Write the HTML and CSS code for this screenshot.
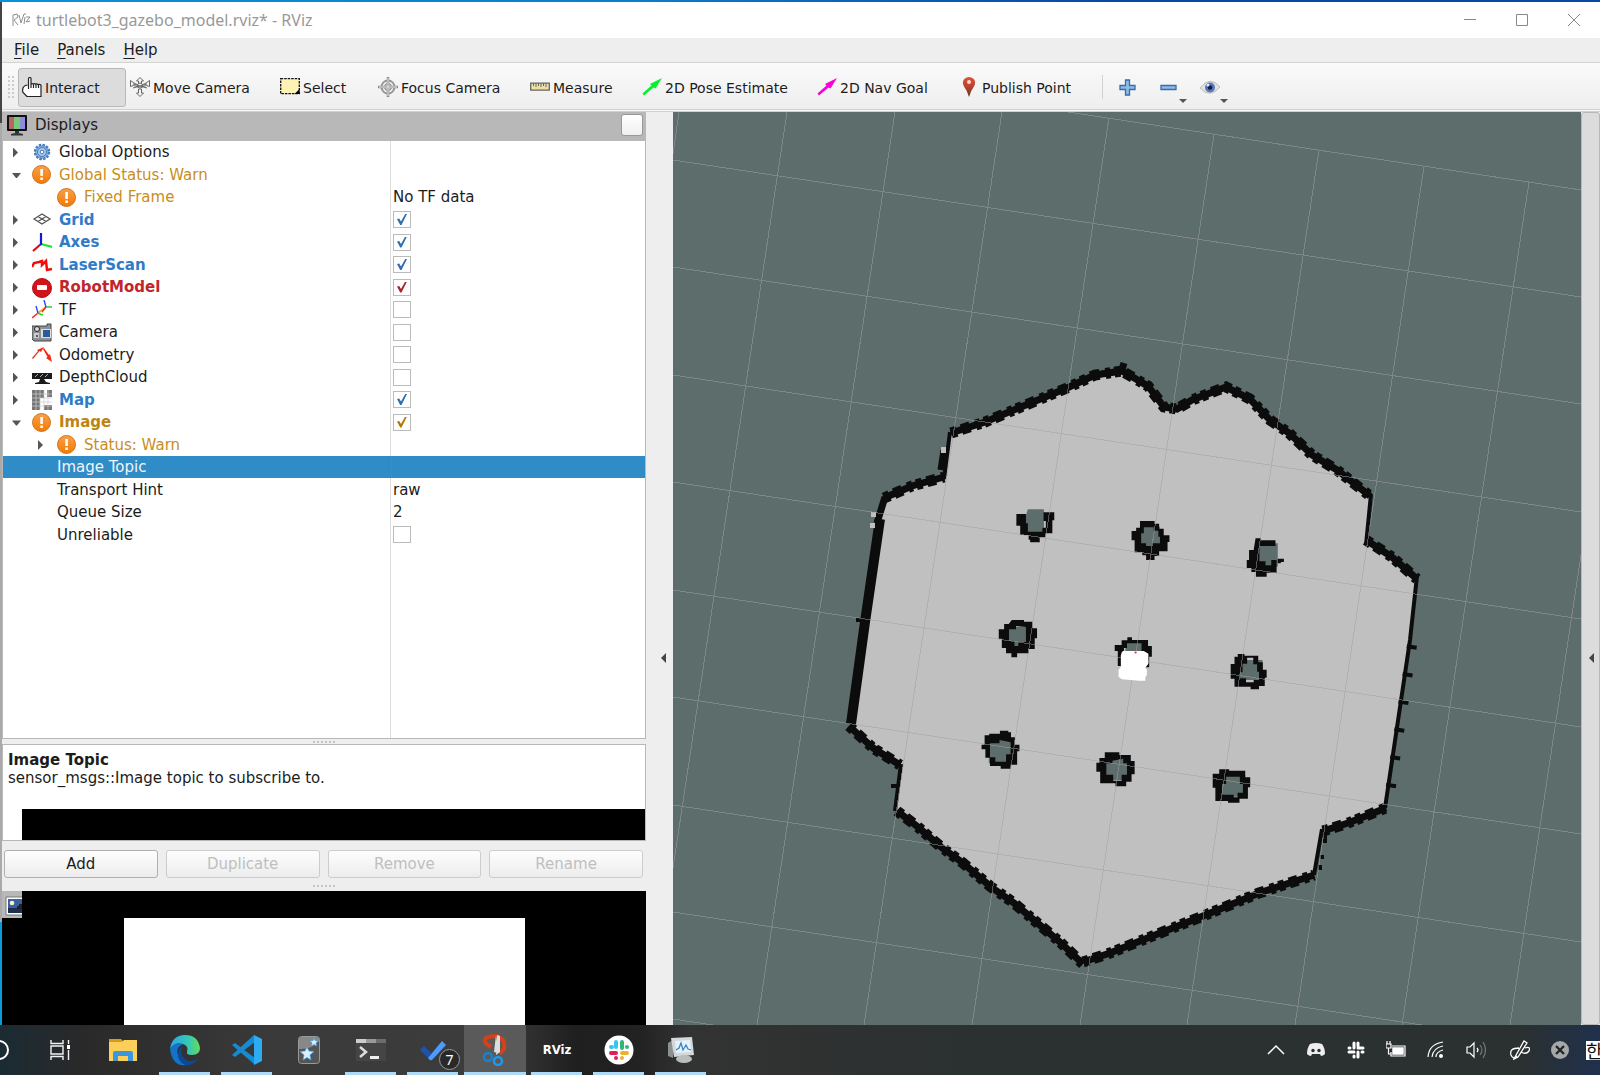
FILE: index.html
```html
<!DOCTYPE html>
<html lang="en">
<head>
<meta charset="utf-8">
<title>turtlebot3_gazebo_model.rviz* - RViz</title>
<link rel="stylesheet" href="styles.css">
</head>
<body>
<div class="window">
<header class="titlebar">
  <svg class="app-mark" width="20" height="16" viewBox="0 0 20 16" fill="none" stroke="#8c8c8c"><path d="M2 14V3l4-1 1 3-4 3 4 5M8 3l2 8 3-9M14 5l-1 7M13 2h2M15 5h4l-4 5 4-1"/></svg>
  <h1 class="title">turtlebot3_gazebo_model.rviz* - RViz</h1>
  <div class="caption-buttons">
    <button aria-label="Minimize"><svg width="12" height="12" viewBox="0 0 12 12"><path d="M0 5.500h12"/></svg></button>
    <button aria-label="Maximize"><svg width="12" height="12" viewBox="0 0 12 12"><path d="M.5.5h11v11H.5z"/></svg></button>
    <button aria-label="Close"><svg width="12" height="12" viewBox="0 0 12 12"><path d="M0 0l12 12M12 0L0 12"/></svg></button>
  </div>
</header>
<nav class="menubar">
  <button><u>F</u>ile</button><button><u>P</u>anels</button><button><u>H</u>elp</button>
</nav>
<div class="toolbar">
  <span class="grip"></span>
  <div class="tools">
  <button class="tool active"><svg width="20" height="20" viewBox="0 0 20 20"><path d="M6.500 12V2q0-1.500 1.300-1.500T9 2v5q1.200-1 2.300.200 1.200-1 2.400 0 1.200-.8 2.300.4 1.800-.8 3 .6V19.500H5L1 15.500q-1-3 .5-5.500 1.500-2 4-2M9 7v4M11.500 7.500V11M14 7.500V11M16.500 8V11" fill="#fff" stroke="#222" stroke-width="1.200"/></svg><span>Interact</span></button>
  <button class="tool"><svg width="20" height="20" viewBox="0 0 20 20"><g fill="#f4f4f4" stroke="#666"><path d="M10 .5L6.500 4h2v3h3V4h2zM10 19.500L6.500 16h2v-4h3v4h2zM.5 3.500v6l3-1L8 10V8L4 6zM19.500 3.500v6l-3-1L12 10V8l4-2z"/><circle cx="10" cy="8.500" r="2.500"/><path d="M3 7l14 4M17 7L3 11"/></g></svg><span>Move Camera</span></button>
  <button class="tool"><svg width="20" height="20" viewBox="0 0 20 20"><path d="M.7 1.700h18.600v15H.7z" fill="#fdf3b5" stroke="#111" stroke-width="1.300" stroke-dasharray="2.500 1"/><path d="M19.500 12v5h-5z"/></svg><span>Select</span></button>
  <button class="tool"><svg width="20" height="20" viewBox="0 0 20 20" fill="none" stroke="#888"><circle cx="10" cy="10" r="6.500" stroke="#999" stroke-width="2"/><circle cx="10" cy="10" r="3.500" stroke="#777"/><path d="M10 0v20M0 10h20" stroke-width="2.500"/><path d="M10 1v18M1 10h18" stroke="#eee"/></svg><span>Focus Camera</span></button>
  <button class="tool"><svg width="20" height="20" viewBox="0 0 20 20"><path d="M.7 6.200h18.600v7H.7z" fill="#ece0a6" stroke="#666" stroke-width="1.300"/><path d="M3.500 6v3M6 6v4M8.500 6v3M11 6v4M13.500 6v3M16 6v4" stroke="#666"/></svg><span>Measure</span></button>
  <button class="tool"><svg width="20" height="20" viewBox="0 0 20 20" fill="#00f32b"><path d="M20 1L8 7l1.500 1.500L.5 16.500 2 18.500 11.500 10.500l2 1z"/></svg><span>2D Pose Estimate</span></button>
  <button class="tool"><svg width="20" height="20" viewBox="0 0 20 20" fill="#fb00d2"><path d="M20 1L8 7l1.500 1.500L.5 16.500 2 18.500 11.500 10.500l2 1z"/></svg><span>2D Nav Goal</span></button>
  <button class="tool pin"><svg width="14" height="20" viewBox="0 0 14 20"><defs><linearGradient id="pin" x2="0" y2="1"><stop offset="0" stop-color="#e0523a"/><stop offset=".5" stop-color="#b8432c"/><stop offset="1" stop-color="#60351f"/></linearGradient></defs><path d="M7 20Q5.500 14 2 9.500-.5 5 2.500 1.800 7-1.800 11.500 1.800 14.500 5 12 9.500 8.500 14 7 20z" fill="url(#pin)"/><circle cx="7" cy="5" r="2" fill="#f8d8c8"/></svg><span>Publish Point</span></button>
  </div>
  <span class="separator"></span>
  <button class="mini" aria-label="Add tool"><svg width="17" height="17" viewBox="0 0 17 17"><path d="M6.500 1h4v5.500H16v4h-5.500V16h-4v-5.500H1v-4h5.500z" fill="#8fbbe8" stroke="#376cab" stroke-width="1.300"/></svg></button>
  <button class="mini drop" aria-label="Remove tool"><svg width="17" height="17" viewBox="0 0 17 17"><path d="M1 6.500h15v4H1z" fill="#8fbbe8" stroke="#376cab" stroke-width="1.300"/></svg></button>
  <button class="mini drop" aria-label="Tool visibility"><svg width="20" height="17" viewBox="0 0 20 17"><path d="M0 9Q10-4 20 8 10 20 0 9z" fill="#e2e2e4" stroke="#bbb"/><circle cx="10" cy="8.500" r="5" fill="#5977b8"/><circle cx="10" cy="8.500" r="2.300" fill="#111b3a"/><circle cx="8" cy="6" r="1.500" fill="#dce8ff"/></svg></button>
</div>
<main class="workspace">
<section class="sidebar">
  <div class="dock-title">
    <svg width="20" height="21" viewBox="0 0 20 21"><rect width="20" height="16" rx="1" fill="#111"/><path d="M2 2h5v12H2z" fill="#bd6363"/><path d="M7 2h6v12H7z" fill="#76cc76"/><path d="M13 2h5v12h-5z" fill="#8c8ce0"/><path d="M8 16h4v2H8zM4 19q6-2 12 0v1.500H4z" fill="#333"/></svg>
    <h2>Displays</h2><button aria-label="Float panel"></button>
  </div>
  <div class="tree-box">
  <table class="tree">
    <tr><td><span class="arrow"></span><svg class="ic" viewBox="0 0 20 20"><circle cx="10" cy="9" r="7" fill="#8fb5e3" stroke="#487bb9" stroke-width="2.500" stroke-dasharray="2.400 1.300"/><circle cx="10" cy="9" r="4.500" fill="#a9c8ee" stroke="#487bb9"/><circle cx="10" cy="9" r="1.800" fill="#fff" stroke="#487bb9"/></svg>Global Options</td><td></td></tr>
    <tr class="warn"><td><span class="arrow open"></span><svg class="ic"><use href="#warning"/></svg>Global Status: Warn</td><td></td></tr>
    <tr class="warn child"><td><span class="arrow none"></span><svg class="ic"><use href="#warning"/></svg>Fixed Frame</td><td>No TF data</td></tr>
    <tr class="on"><td><span class="arrow"></span><svg class="ic" viewBox="0 0 20 20" fill="none" stroke="#555" stroke-width="1.300"><path d="M2 9l8-5 8 5-8 5zM6 6.500l8 5M14 6.500l-8 5"/></svg>Grid</td><td><input type="checkbox" aria-label="Grid" checked></td></tr>
    <tr class="on"><td><span class="arrow"></span><svg class="ic" viewBox="0 0 20 20" fill="none" stroke-width="2.200"><path d="M9 11L1 18" stroke="#d80d18"/><path d="M9 11l11 3" stroke="#16ec22"/><path d="M9 12V0" stroke="#1616e8"/></svg>Axes</td><td><input type="checkbox" aria-label="Axes" checked></td></tr>
    <tr class="on"><td><span class="arrow"></span><svg class="ic" viewBox="0 0 20 20" fill="none" stroke="#f50b0b" stroke-width="2.500"><path d="M0 12l2-4 5-1 3-1v4l4-4 1 9 5-1"/></svg>LaserScan</td><td><input type="checkbox" aria-label="LaserScan" checked></td></tr>
    <tr class="error"><td><span class="arrow"></span><svg class="ic" viewBox="0 0 20 20"><circle cx="10" cy="10" r="9.500" fill="#d21319" stroke="#ad1116"/><rect x="5" y="7" width="10" height="5" rx="1" fill="#fff"/></svg>RobotModel</td><td><input type="checkbox" aria-label="RobotModel" checked></td></tr>
    <tr><td><span class="arrow"></span><svg class="ic" viewBox="0 0 20 20" fill="none" stroke-width="1.400"><path d="M6 13l8-6" stroke="#f4b21a" stroke-width="2"/><path d="M6 13l-6 5M14 7l-4 5" stroke="#f22"/><path d="M5 13l6 2M14 7h6" stroke="#1adc1a"/><path d="M6 13L4 6M14 7L12 0" stroke="#34f"/></svg>TF</td><td><input type="checkbox" aria-label="TF"></td></tr>
    <tr><td><span class="arrow"></span><svg class="ic" viewBox="0 0 20 20"><path d="M1 3h14V1h4v17H2L0 16V3z" fill="#8e9295" stroke="#444"/><circle cx="5" cy="6" r="2.500" fill="#ddd" stroke="#222"/><path d="M9 6h10v9H9z" fill="#ddd"/><path d="M11 7h7v7h-7z" fill="#285a9c"/><path d="M2 10h5v5H2z" fill="#ccc"/><circle cx="5" cy="13" r="1" fill="#333"/></svg>Camera</td><td><input type="checkbox" aria-label="Camera"></td></tr>
    <tr><td><span class="arrow"></span><svg class="ic" viewBox="0 0 20 20" fill="#f42a18"><path d="M0 13L6 6 5 5l7-3-3 5-1.500-1L1 14zM12 3l5 7 1-1 2 8-6-4 1.500-1L11 4z"/></svg>Odometry</td><td><input type="checkbox" aria-label="Odometry"></td></tr>
    <tr><td><span class="arrow"></span><svg class="ic" viewBox="0 0 20 20" fill="#1b1b1b"><path d="M0 5h20v6H0zM8 11h4l2 3 4 1v1H3v-1l4-1z"/><path d="M3 9l3-3M8 9l3-3M13 9l3-3" stroke="#aaa"/></svg>DepthCloud</td><td><input type="checkbox" aria-label="DepthCloud"></td></tr>
    <tr class="on"><td><span class="arrow"></span><svg class="ic" viewBox="0 0 20 20"><path d="M0 0h12v8H8v12H0zM15 0h5v7h-5zM12 15h8v5h-8z" fill="#777"/><path d="M4 0v20M8 0v20M12 0v20M16 0v20M0 4h20M0 8h20M0 12h20M0 16h20" stroke="#ccc" stroke-width=".7"/></svg>Map</td><td><input type="checkbox" aria-label="Map" checked></td></tr>
    <tr class="warn bold"><td><span class="arrow open"></span><svg class="ic"><use href="#warning"/></svg>Image</td><td><input type="checkbox" aria-label="Image" checked></td></tr>
    <tr class="warn child"><td><span class="arrow"></span><svg class="ic"><use href="#warning"/></svg>Status: Warn</td><td></td></tr>
    <tr class="leaf selected"><td>Image Topic</td><td></td></tr>
    <tr class="leaf"><td>Transport Hint</td><td>raw</td></tr>
    <tr class="leaf"><td>Queue Size</td><td>2</td></tr>
    <tr class="leaf"><td>Unreliable</td><td><input type="checkbox" aria-label="Unreliable"></td></tr>
  </table>
  </div>
  <div class="handle"></div>
  <div class="help-box"><h3>Image Topic</h3><p>sensor_msgs::Image topic to subscribe to.</p><div class="blank"></div></div>
  <div class="actions"><button>Add</button><button disabled>Duplicate</button><button disabled>Remove</button><button disabled>Rename</button></div>
  <div class="handle low"></div>
  <div class="image-panel">
    <div class="image-tab"><svg width="17" height="20" viewBox="0 0 17 20"><path d="M1 1h20v18H1z" fill="#fff" stroke="#777"/><path d="M3 3h16v14H3z" fill="#3b5e9e"/><path d="M3 12h14v5H3z" fill="#1f2e50"/><circle cx="7" cy="7" r="2.300" fill="#f4f3cd"/><path d="M12 13v-3h2V8h3v5z" fill="#222"/></svg></div>
    <div class="image-view"></div>
  </div>
</section>
<button class="collapse left" aria-label="Collapse left dock"></button>
<section class="view" aria-label="3D view">
<svg viewBox="673 112 908 913" preserveAspectRatio="xMidYMid slice">
  <path fill="#c0c0c0" d="M1121 371L1171 409 1190 400 1226 386 1251 398 1289 433 1370 495 1366 541 1415 578 1410 640 1385 807 1347 825 1322 831 1314 875 1259 895 1203 917 1098 958 1083 965 1060 942 1014 903 991 887 941 847 897 810 901 765 850 725 880 520 884 497 945 477 951 433 1021 408 1067 388z"/>
  <g class="wall">
    <path d="M951 433L985 422 1021 407 1067 388 1095 375 1122 371 1148 386 1164 407 1177 409 1192 400 1226 387 1250 399 1270 420 1289 433 1312 455 1337 470 1370 496"/>
    <path d="M1366 540L1392 557 1417 579M849 726L873 748 900 765M897 811L918 827 941 847 963 863 991 887 1014 903 1035 921 1060 942 1083 964"/>
    <path d="M1083 962L1110 953 1150 937 1203 916 1259 893 1314 875M1323 831L1348 823 1386 808M884 498L912 486 944 477"/>
    <path class="rough" d="M951 433L985 422 1021 407 1067 388 1095 375 1122 371 1148 386 1164 407 1177 409 1192 400 1226 387 1250 399 1270 420 1289 433 1312 455 1337 470 1370 496"/>
    <path class="rough" d="M1366 540L1392 557 1417 579M849 726L873 748 900 765M897 811L918 827 941 847 963 863 991 887 1014 903 1035 921 1060 942 1083 964"/>
    <path class="rough" d="M1083 962L1110 953 1150 937 1203 916 1259 893 1314 875M1323 831L1348 823 1386 808M884 498L912 486 944 477"/>
    <path class="thick" d="M880 519L865 622 851 724"/>
    <path class="thin" d="M1371 494L1366 545M1417 576L1410 640 1385 808M901 764L895 811M1322 829L1314 875M950 432L944 479"/>
    <path d="M885 497L877 523M944 450L941 470M1121 373l3-10" />
    <path class="thick" stroke-dasharray="4 24" d="M1412 645L1388 806"/>
    <path class="thin" d="M856 620h8M891 786h6M1325 831v12M1322 855v4M1320 865v5"/>
  </g>
  <path fill="#c0c0c0" d="M941 447h5v6h-5zM871 512h5v5h-5zM870 523h5v5h-5z"/>
  <g transform="translate(830 350) scale(.3827 .3333)">
    <g fill="#5c6d6b"><path d="M517 478h42v70h-52v-35zM812 530h50v70h-50zM1118 580h52v70h-52zM468 830h50v60h-50zM772 875h45v35h-45zM1065 930h65v60h-65z"/></g>
    <g fill="#0c0c0c" fill-rule="evenodd">
      <path d="M487 492h25v28h5v25h38v-12h9v-20h-6v-26h28v24h-5v39h-18v12h-15v15h-25v-8h-4v-14h-22v-28h-10z"/>
      <path d="M810 513h38v8h12v15h12v20h15v20h-5v28h-22v14h-12v12h-22v-14h-10v-9h-20v-36h-8v-28h12v-10h10zM820 532v18h-7v30h13v8h16v-8h20v-20h-4v-18h-12v-10z"/>
      <path d="M1112 565h14v6h38v17h-42v46h16v12h15v-16h14v38h-26v12h-28v-14h-12v-12h-12v-24h6v-30h12zM1170 640v-14h16v10h-8v4z"/>
      <path d="M475 810h32v5h22v20h12v30h-6v32h-16v13h-30v12h-15v-12h-14v-16h-11v-28h-8v-28h14v-16h12zM486 828v10h-18v35h14v15h10v-12h20v-45z"/>
      <path d="M777 862h12v8h42v18h10v32h-7v32h-12v-42h-8v-30h-38v14h-8v12h-6v42h-10v-45h-8v-18h18v-14h15z"/>
      <path d="M1065 912h18v5h36v20h12v22h10v24h-5v25h-15v10h-22v-8h-42v-24h-10v-44h10v-22h9zM1090 923v18h-12v26h-7v18h16v12h20v-7h14v-25h-5v-22h-10v-20z"/>
    </g>
  </g>
  <g transform="translate(830 640) scale(.3827 .3333)">
    <g fill="#5c6d6b"><path d="M415 300h60v70h-60zM720 355h60v65h-60zM1025 405h60v65h-60z"/></g>
    <g fill="#0c0c0c" fill-rule="evenodd">
      <path d="M444 272h22v5h7v15h10v22h12v20h-6v40h-17v12h-26v-8h-28v-25h-12v-25h-10v-14h8v-28h12v-5h28zM443 300v10h-25v42h14v13h28v-22h12v-36z"/>
      <path d="M718 337h38v8h30v18h10v40h-8v22h-14v14h-28v-9h-40v-35h-10v-27h8v-14h14zM738 362v8h-16v34h18v18h22v-18h14v-34h-10v-14z"/>
      <path d="M1017 388h26v4h42v20h13v30h-6v34h-22v12h-30v-5h-33v-40h-7v-42h17zM1035 410v22h-10v32h30v8h10v-14h14v-26h-8v-22z"/>
    </g>
  </g>
  <path class="grid" d="M679 112L673 154M787 112L673 868M895 112L757 1025M1002 112L864 1025M1109 118L972 1025M1214 134L1080 1025M1319 150L1187 1025M1424 166L1295 1025M1529 182L1402 1025M1581 555L1510 1025M1068 112L1581 190M673 160L1581 297M673 267L1581 404M673 375L1581 512M673 482L1581 619M673 590L1581 727M673 697L1581 834M673 805L1581 942M673 912L1422 1025M673 1019L713 1025"/>
  <g transform="translate(830 350) scale(.3827 .3333)">
    <path fill="#fff" d="M765 903h55l12 8v30l-8 12 4 6v16l-4 7v10h-16l-45-4-9-8v-20l6-10v-34z"/>
    <path fill="#d22" d="M796 905h5v5h-5z"/>
  </g>
</svg>
</section>
<button class="collapse right" aria-label="Expand right dock"></button>
</main>
</div>
<footer class="taskbar">
  <div class="apps">
    <button aria-label="Cortana"><svg width="22" height="22" viewBox="0 0 22 22"><circle cx="11" cy="11" r="9" fill="none" stroke="#fff" stroke-width="2"/></svg></button>
    <button aria-label="Task view"><svg width="22" height="20" viewBox="0 0 22 20" fill="none" stroke="#f2f2f2" stroke-width="1.400"><path d="M1 0v3.500h12V0M1 20v-3.500h12V20M1 6h12v8H1zM18.500 0v4M18.500 10v10"/><path d="M17 5h3v4h-3z" fill="#fff" stroke="none"/></svg></button>
    <button aria-label="File Explorer"><svg width="28" height="24" viewBox="0 0 28 24"><path d="M0 1h12l3 3H0z" fill="#d99a16"/><path d="M0 4h13l2-2h13v21H0z" fill="#fccf5a"/><path d="M4 23v-8q0-2 2-2h16q2 0 2 2v8h-5v-5H9v5z" fill="#3b97dd"/></svg></button>
    <button class="open" aria-label="Edge"><svg width="32" height="32" viewBox="0 0 32 32"><defs><linearGradient id="ed" x2="1"><stop stop-color="#2aa7e0"/><stop offset=".6" stop-color="#35c6b8"/><stop offset="1" stop-color="#67db58"/></linearGradient></defs><path d="M1 15Q3 1 16 1t15 13q0 7-8 7-6 0-5-3Q20 12 14 10 6 8 1 15z" fill="url(#ed)"/><path d="M1 15Q6 7 14 10q-8 4-5 11 4 9 13 9Q4 36 1 15z" fill="#1473c7"/><path d="M14 12q-5 8 3 14 6 3 12-2-4 8-13 7Q8 27 9 19q1-5 5-7z" fill="#0c4a96"/></svg></button>
    <button class="open" aria-label="Visual Studio Code"><svg width="32" height="32" viewBox="0 0 32 32"><path d="M1 11l3-2 20 15V8L4 23l-3-2 22-20v29z" fill="#168bd2"/><path d="M23 1l8 4v22l-8 4z" fill="#2cadf3"/></svg></button>
    <button aria-label="Anki"><svg width="22" height="28" viewBox="0 0 22 28"><rect x=".5" y=".5" width="21" height="27" rx="3" fill="#555" stroke="#999"/><path d="M1 13q12 1 20-8V3q0-2-2-2H3Q1 1 1 3z" fill="#888"/><path d="M9 11l2 4 5 .5-4 3.500 1 5-4-2.500L5 24l1-5-4-3.500 5-.5zM16 2l1 2.500 3 .5-2 2 .5 3-2.500-1.500L13.500 10l.5-3-2-2 3-.5z" fill="#d9efff" stroke="#3b9fe8" stroke-width=".7"/></svg></button>
    <button class="open" aria-label="Terminal"><svg width="30" height="24" viewBox="0 0 30 24"><path d="M0 1h30v22H0z" fill="#454545"/><path d="M0 1h10v4H0z" fill="#ccc"/><path d="M10 1h10v4H10z" fill="#999"/><path d="M20 1h10v4H20z" fill="#6c6c6c"/><path d="M4 9l6 5-6 5" fill="none" stroke="#ddd" stroke-width="2.500"/><path d="M14 18h9v3h-9z" fill="#eee"/></svg></button>
    <button class="open" aria-label="To Do, 7 tasks"><svg width="26" height="22" viewBox="0 0 26 22"><path d="M0 11l4-4 8 8-4 4z" fill="#1c53ad"/><path d="M8 19L22 2l4 4-14 15q-2 1-4-2z" fill="#4d9bff"/></svg><b class="badge">7</b></button>
    <button class="open current" aria-label="Snip"><svg width="26" height="32" viewBox="0 0 26 32"><path d="M9 13Q0 8 4 4 8 2 14 2q10 2 8 13l-4 5" fill="none" stroke="#d6401a" stroke-width="4"/><path d="M14 1l2 18-4-1zM15 1l3 1v16l-4 3z" fill="#ddd"/><circle cx="6" cy="23" r="4" fill="none" stroke="#1583cf" stroke-width="2.500"/><circle cx="16" cy="27" r="4" fill="none" stroke="#1d99e7" stroke-width="2.500"/></svg></button>
    <button class="open rviz">RViz</button>
    <button class="open" aria-label="Slack"><svg width="30" height="30" viewBox="0 0 30 30"><circle cx="15" cy="15" r="14.500" fill="#fff"/><g stroke-width="4" stroke-linecap="round"><path d="M12 7v5M7 12h1" stroke="#36c5f0"/><path d="M18 7v6M23 12h0" stroke="#2eb67d"/><path d="M7 18h5M12 23h0" stroke="#e01e5a"/><path d="M18 18h5M18 23h0" stroke="#ecb22e"/></g></svg></button>
    <button class="open" aria-label="Performance monitor"><svg width="28" height="28" viewBox="0 0 28 28"><path d="M1 7l5-3v18l-5-2z" fill="#8b9190"/><path d="M4 2l21-1 2 18-20 2z" fill="#d3d8db"/><path d="M8 5l15-1 1 12-15 1z" fill="#e4f2fb"/><path d="M9 14l3-2 2-5 2 7 3-5 2 4 3 1" fill="none" stroke="#3b83c0" stroke-width="1.300"/><ellipse cx="17" cy="23" rx="8" ry="4" fill="#b9bdbd"/></svg></button>
  </div>
  <div class="tray">
    <svg viewBox="0 0 20 20"><path d="M2 14l8-8 8 8"/></svg>
    <svg viewBox="0 0 20 20"><path fill="#eee" stroke="none" d="M4 4q6-2 12 0 3 4 3 10-2 2-4 2l-1-2H6l-1 2q-2 0-4-2 0-6 3-10z"/><circle cx="7" cy="10.500" r="1.700" fill="#2b3030" stroke="none"/><circle cx="13" cy="10.500" r="1.700" fill="#2b3030" stroke="none"/></svg>
    <svg viewBox="0 0 20 20" class="fat"><path d="M8 3v5M12 3v3M12 8h5M3 8h1M3 12h5M8 16v1M12 12v5M16 12h1"/></svg>
    <svg viewBox="0 0 20 20"><path d="M6 6h13v10H5v-4M0 4h5v4H0zM1 4V1M4 4V1M2.500 8v6h3" stroke-width="1.200"/><path d="M7 8h10v6H7z" fill="#fff"/></svg>
    <svg viewBox="0 0 20 20"><path d="M2 17Q3 4 17 2M6 17Q7 8 17 6M10 17q0-5 7-7" stroke-width="1.200"/><circle cx="15" cy="16" r="2" fill="#fff" stroke="none"/></svg>
    <svg viewBox="0 0 20 20"><path d="M1 7h3l4-4v14l-4-4H1zM11 8q2 2 0 4" stroke-width="1.200"/><path d="M14 5q4 5 0 10M17 2q5 8 0 16" stroke="#777" stroke-width="1.200"/></svg>
    <svg viewBox="0 0 20 20" class="pen"><path d="M5 17L14 1l3 2L8 17l-4 2zM9 8q-10 0-8 7 2 5 6 1M15 8q6-2 4 3-3 4-8 1" stroke-width="1.300"/></svg>
    <svg viewBox="0 0 20 20"><circle cx="10" cy="10" r="9" fill="#a4a8a8" stroke="none"/><path d="M6 6l8 8M14 6l-8 8" stroke="#202525" stroke-width="2.300"/></svg>
    <span class="ime">한</span>
  </div>
</footer>
<svg class="defs" width="0" height="0"><defs><linearGradient id="og" x2="0" y2="1"><stop stop-color="#f9a04a"/><stop offset="1" stop-color="#f57900"/></linearGradient><symbol id="warning" viewBox="0 0 20 20"><circle cx="9.500" cy="9.500" r="9" fill="url(#og)" stroke="#d0731c"/><path d="M8.300 4h2.600v7H8.300zM8.300 12.500h2.600V15H8.300z" fill="#fff"/></symbol></defs></svg>
</body>
</html>
```
FILE: styles.css
```css
* { box-sizing: border-box; }
body { margin: 0; height: 100vh; display: flex; flex-direction: column; overflow: hidden; font: 15px/22px "DejaVu Sans", sans-serif; color: #1c1c1c; background: #eee; }
button { font: inherit; color: inherit; border: 0; padding: 0; background: none; }
h1, h2, h3, p { margin: 0; font-size: 15px; font-weight: 400; }
.defs { position: absolute; }
.window { flex: 1; min-height: 0; display: flex; flex-direction: column; padding: 2px 0 0 2px; background: linear-gradient(90deg, #0a90dd, #0a7dcb 40%, #0a45a8 70%) 0 0 / 100% 2px no-repeat, linear-gradient(#444 12%, #aaa 12% 90%, #0a9bdc 90%) 0 0 / 2px 100% no-repeat, #eee; }

.titlebar { display: flex; align-items: center; flex: 0 0 36px; padding-left: 9px; background: #fff; color: #999; }
.title { margin-left: 5px; flex: 1; font-family: "Noto Sans", sans-serif; font-size: 16px; }
.caption-buttons { display: flex; }
.caption-buttons button { width: 52px; height: 34px; display: grid; place-items: center; }
.caption-buttons path { fill: none; stroke: #888; }

.menubar { flex: 0 0 25px; display: flex; gap: 18px; padding-left: 12px; border-bottom: 1px solid #d3d3d3; }
.menubar u { text-underline-offset: 3px; }

.toolbar { flex: 0 0 49px; display: flex; align-items: center; padding-top: 2px; border-bottom: 3px double #d0d0d0; background: linear-gradient(#fafafa, #eee); font-size: 14px; }
.grip { width: 6px; height: 22px; margin: 0 4px 0 6px; background: radial-gradient(circle at 1px 1px, #ccc 1px, transparent 1px) 0 0 / 4px 4px; }
.tools { display: grid; grid-template-columns: 108px 150px 98px 152px 112px 175px 143px 141px; }
.tool { display: flex; align-items: center; gap: 3px; height: 39px; padding: 0 0 0 3px; border: 1px solid transparent; white-space: nowrap; }
.tool span { padding-top: 1px; }
.tool svg { margin-bottom: 1px; }
.tool.active { border-color: #b8b8b8; border-radius: 3px; background: #dcdcdc; }
.tool.pin { gap: 6px; padding-left: 5px; }
.separator { width: 1px; height: 24px; margin: 0 4px 0 5px; background: #d2d2d2; }
.mini { position: relative; width: 41px; height: 36px; display: grid; place-items: center; }
.mini.drop::after { content: ""; position: absolute; right: 2px; bottom: 2px; border: 4px solid transparent; border-top-color: #555; border-bottom: 0; }

.workspace { flex: 1; min-height: 0; display: flex; }
.sidebar { flex: 0 0 644px; display: flex; flex-direction: column; min-height: 0; }
.dock-title { flex: 0 0 29px; display: flex; align-items: center; padding: 0 3px 3px 5px; background: #b8b8b8; }
.dock-title h2 { flex: 1; margin-left: 8px; }
.dock-title button { width: 22px; height: 22px; border: 1px solid #999; border-radius: 3px; background: linear-gradient(#fff, #f0f0f0); }
.tree-box { flex: 1; min-height: 405px; border: 1px solid #b8b8b8; border-top: 0; background: linear-gradient(#ddd, #ddd) 387px 0 / 1px 100% no-repeat #fff; }
.tree { width: 100%; border-collapse: collapse; table-layout: fixed; }
.tree tr { height: 22px; }
.tree tr:nth-child(even) { height: 23px; }
.tree td { padding: 0 0 0 2px; line-height: 20px; vertical-align: middle; white-space: nowrap; }
.tree td:first-child { width: 388px; padding-left: 9px; }
.tree .child td:first-child { padding-left: 34px; }
.tree .leaf td:first-child { padding-left: 54px; }
.ic { width: 20px; height: 20px; margin: -3px 7px -3px 0; vertical-align: middle; }
.arrow { display: inline-block; width: 20px; height: 10px; background: linear-gradient(#555, #555) 1px 0 / 5px 10px no-repeat; clip-path: polygon(1px 0, 6px 5px, 1px 10px); vertical-align: middle; }
.arrow.open { background: #555; clip-path: polygon(0 3px, 9px 3px, 5px 8px, 4px 8px); }
.arrow.none { background: none; }
.on td { color: #307bc7; font-weight: 700; }
.error td { color: #c2262b; font-weight: 700; }
.warn td:first-child { color: #c98d1b; }
.warn.bold td { font-weight: 700; color: #be8412; }
.warn input { color: #b07800; }
.on input { color: #2d6fb0; }
.error input { color: #a92329; }
.selected td { background: #308cc6; color: #eef4f9; }
.tree .selected td + td { border-left: 1px solid #4a8ab5; }
.tree input { appearance: none; display: block; width: 18px; height: 17px; margin: 0; border: 1px solid #bbb; background: #fff; }
.tree input:checked::before { content: ""; display: block; width: 10px; height: 11px; margin: 2px 3px; background: currentColor; clip-path: polygon(0 45%, 22% 42%, 40% 68%, 82% 0, 100% 0, 45% 100%, 32% 100%); }

.handle { flex: 0 0 5px; background: repeating-linear-gradient(90deg, #c4c4c4 0 2px, transparent 2px 4px) 50% 2px / 22px 2px no-repeat; }
.handle.low { flex-basis: 13px; background-position-y: 7px; }
.help-box { flex: 0 0 97px; display: flex; flex-direction: column; padding-top: 6px; border: 1px solid #b8b8b8; background: #fff; line-height: 18px; }
.help-box h3 { padding-left: 5px; font-weight: 700; }
.help-box p { padding-left: 5px; }
.blank { margin: auto 0 0 19px; height: 31px; background: #000; }
.actions { display: grid; grid-template-columns: repeat(4, 1fr); gap: 8px; padding: 9px 3px 0 2px; }
.actions button { height: 28px; border: 1px solid #b0b0b0; border-radius: 3px; background: linear-gradient(#fefefe, #ececec); }
.actions button:disabled { color: #bfbfbf; border-color: #ccc; }
.image-panel { flex: 0 0 134px; display: flex; flex-direction: column; background: #000; }
.image-tab { flex: 0 0 27px; width: 20px; padding: 5px 0 0 3px; background: #b8b8b8; }
.image-tab svg { display: block; }
.image-view { flex: 1; width: 401px; margin-left: 122px; background: #fff; }

.collapse { position: relative; flex: 0 0 27px; }
.collapse::after { content: ""; position: absolute; right: 7px; top: calc(60% - 7px); border: 5px solid transparent; border-right-color: #444; border-left: 0; }
.collapse.right { flex-basis: 19px; border: 1px solid #b8b8b8; border-radius: 3px; background: #dcdcdc; }
.collapse.right::after { right: 5px; }
.view { flex: 1; min-width: 0; background: #5c6d6b; }
.view svg { display: block; width: 100%; height: 100%; }
.wall { fill: none; stroke: #0c0c0c; stroke-width: 7; }
.wall .rough { stroke-width: 11; stroke-dasharray: 6 5 9 6 5 4; }
.wall .thick { stroke-width: 10; }
.wall .thin { stroke-width: 4; }
.grid { fill: none; stroke: #a0a0a4; stroke-opacity: .5; shape-rendering: crispEdges; }

.taskbar { flex: 0 0 50px; display: flex; justify-content: space-between; overflow: hidden; background: linear-gradient(90deg, #1b2b33 0, #292929 5%, #3a3a3a 17%, #3c3c3c 31%, #1f1f1f 36%, #222 40%, #333 43%, #2b3030 60%, #2b3030 95%, #20304c); color: #fff; }
.apps { display: flex; margin-left: -32px; }
.apps button { position: relative; flex: 0 0 62px; display: grid; place-items: center; }
.apps .open::after { content: ""; position: absolute; left: 5px; right: 6px; bottom: 0; height: 3px; background: #add9f7; }
.apps .current { background: #5a5a5a; }
.apps .current::after { left: 0; right: 0; }
.badge { position: absolute; left: 37px; top: 24px; width: 21px; height: 21px; border: 1px solid #999; border-radius: 50%; background: #292929; font: 14px/19px "Noto Sans", sans-serif; text-align: center; }
.apps .rviz { font: 700 13px/20px "DejaVu Sans Condensed", "DejaVu Sans", sans-serif; }
.tray { display: flex; align-items: center; gap: 20px; }
.tray svg { width: 20px; height: 20px; fill: none; stroke: #fff; stroke-width: 1.5; }
.tray .fat { stroke-width: 3; stroke-linecap: round; }
.tray .pen { margin-left: 4px; }
.ime { width: 14px; height: 19px; margin-left: -4px; overflow: hidden; background: #fff; color: #111; font: 18px/18px "Noto Sans CJK KR", sans-serif; }
```
